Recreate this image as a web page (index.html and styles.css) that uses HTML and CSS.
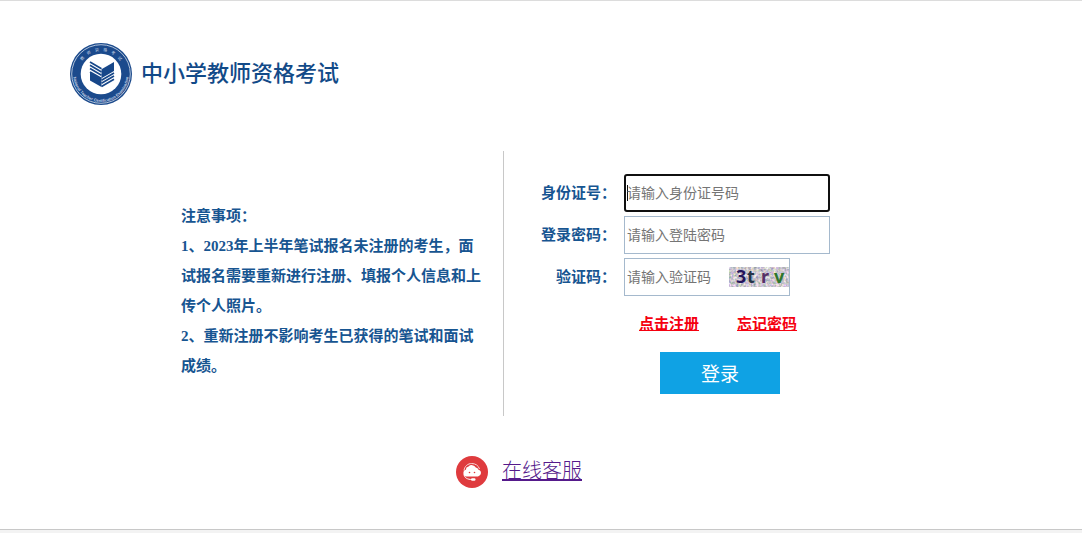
FILE: index.html
```html
<!DOCTYPE html>
<html lang="zh-CN">
<head>
<meta charset="utf-8">
<meta name="viewport" content="width=device-width, initial-scale=1">
<title>中小学教师资格考试</title>
<link rel="stylesheet" href="styles.css">
</head>
<body>
<div class="page">
  <header class="brand">
    <svg class="brand-logo" viewBox="0 0 62 62" aria-hidden="true">
      <defs>
        <path id="arc-top" d="M8 31a23 23 0 0 1 46 0"/>
        <path id="arc-bottom" d="M3.900 25A27.800 27.800 0 1 0 58.100 25"/>
      </defs>
      <circle cx="31" cy="31" r="31" fill="#1b4a8c"/>
      <circle cx="31" cy="31" r="29.300" fill="none" stroke="#d5dfec" stroke-width=".8"/>
      <circle cx="31" cy="31" r="20.300" fill="#fff"/>
      <text class="seal-cn" text-anchor="middle"><textPath href="#arc-top" startOffset="50%">教　师　资　格　考　试</textPath></text>
      <text class="seal-en" text-anchor="middle"><textPath href="#arc-bottom" startOffset="50%">National Teacher Certification Examination</textPath></text>
      <g fill="#174789">
        <path d="M20 29.300 31.500 35.800v8.200L20 37.500z"/>
        <path d="M31.500 26.200 44 19v9L31.500 35.200z"/>
      </g>
      <g fill="none" stroke="#174789" stroke-width="1.700">
        <path d="M20 19 31.500 25.700M20 22.300 31.500 29M20 25.600 31.500 32.300M20 28.900 31.500 35.600"/>
        <path d="M31.500 37.200 44 30M31.500 40.300 44 33.100M31.500 43.400 44 36.200"/>
      </g>
    </svg>
    <h1 class="brand-name">中小学教师资格考试</h1>
  </header>

  <main class="content">
    <section class="notice">
      <div class="notice-text">
        <p>注意事项：</p>
        <p>1、2023年上半年笔试报名未注册的考生，面试报名需要重新进行注册、填报个人信息和上传个人照片。</p>
        <p>2、重新注册不影响考生已获得的笔试和面试成绩。</p>
      </div>
    </section>
    <form class="login">
      <div class="row">
        <label class="label" for="idno">身份证号：</label>
        <input class="field field-active" id="idno" type="text" placeholder="请输入身份证号码">
      </div>
      <div class="row">
        <label class="label" for="pwd">登录密码：</label>
        <input class="field" id="pwd" type="password" placeholder="请输入登陆密码">
      </div>
      <div class="row">
        <label class="label" for="code">验证码：</label>
        <div class="field captcha-box">
          <input class="captcha-input" id="code" type="text" placeholder="请输入验证码">
          <svg class="captcha" viewBox="0 0 60 20" role="img" aria-label="3trv">
            <defs>
              <filter id="grain" x="0" y="0" width="100%" height="100%" color-interpolation-filters="sRGB">
                <feTurbulence type="fractalNoise" baseFrequency=".4" numOctaves="2" seed="4"/>
                <feColorMatrix values=".7 0 0 0 .45  .5 .3 0 0 .38  .3 0 .4 0 .46  0 0 0 0 1"/>
              </filter>
            </defs>
            <rect width="60" height="20" filter="url(#grain)"/>
            <text class="captcha-char" x="7" y="16" fill="#24145c">3</text>
            <text class="captcha-char" x="18" y="16" fill="#263448">t</text>
            <text class="captcha-char" x="32" y="16" fill="#573067">r</text>
            <text class="captcha-char" x="45" y="16" fill="#2e762c">v</text>
          </svg>
        </div>
      </div>
      <div class="links">
        <a class="link" href="#register">点击注册</a>
        <a class="link" href="#forgot">忘记密码</a>
      </div>
      <button class="submit" type="submit">登录</button>
    </form>
  </main>

  <div class="service">
    <svg class="service-icon" viewBox="0 0 32 32" aria-hidden="true">
      <circle cx="16" cy="16" r="16" fill="#df3b3e"/>
      <path d="M8 14.500C8.500 10 12 7.500 15.700 7.500S22.500 9.500 23.500 13" fill="none" stroke="#f8d5d5" stroke-width="1"/>
      <path d="M10.500 20.500a3.500 3.500 0 0 1-.7-6.800 3.300 3.300 0 0 1 2.700-3.200 4.600 4.600 0 0 1 7.300.9 3.300 3.300 0 0 1 2.700 2.300 3.500 3.500 0 0 1-.5 6.800z" fill="#fff"/>
      <path d="M8 18.500c.5 3.500 3.500 5 8 5" fill="none" stroke="#fff" stroke-width="1"/>
      <rect x="15" y="22.300" width="4.500" height="2.400" rx="1.200" fill="#fff"/>
      <circle cx="13.500" cy="16.500" r=".8" fill="#df3b3e"/>
      <circle cx="18.500" cy="16.500" r=".8" fill="#df3b3e"/>
    </svg>
    <a class="service-link" href="#service">在线客服</a>
  </div>
</div>
</body>
</html>
```
FILE: styles.css
```css
* { box-sizing: border-box; }

body {
  margin: 0;
  background: #f3f3f3;
  color: #175591;
  font-family: "Liberation Serif", "Noto Sans CJK SC", sans-serif;
  font-size: 15px;
}

.page {
  border-top: 1px solid #dcdcdc;
  border-bottom: 1px solid #c8c8c8;
  background: #fff;
  padding-bottom: 41px;
}

.brand {
  display: flex;
  align-items: center;
  gap: 9px;
  padding: 42px 70px 0;
}

.brand-logo { width: 62px; height: 62px; }

.brand-name {
  margin: 0;
  padding-bottom: 6px;
  color: #124a88;
  font-family: "Noto Sans CJK SC", sans-serif;
  font-size: 22px;
  font-weight: 500;
  line-height: 32px;
}

.seal-cn {
  fill: #c8d5e7;
  font: 4px "Noto Sans CJK SC", sans-serif;
}

.seal-en {
  fill: #c8d5e7;
  font: bold 4px "Liberation Sans", sans-serif;
}

.content {
  display: grid;
  grid-template-columns: 503fr 579fr;
  margin-top: 46px;
}

.notice {
  display: flex;
  justify-content: flex-end;
  align-items: center;
  padding: 50px 22px 35px 16px;
}

.notice-text {
  width: 300px;
  font-weight: 700;
  line-height: 30px;
}

.notice-text p { margin: 0; }

.login {
  display: flex;
  flex-direction: column;
  align-items: flex-start;
  gap: 4px;
  padding: 23px 16px 22px 37px;
  border-left: 1px solid #c8c8c8;
}

.row {
  display: flex;
  align-items: center;
  gap: 8px;
}

.label {
  width: 75px;
  padding-bottom: 3px;
  font-weight: 700;
  text-align: right;
}

.field {
  width: 206px;
  height: 38px;
  padding: 0 2px 2px;
  border: 1px solid #a5b9cd;
  background: #fff;
  font: 14px "Noto Sans CJK SC", sans-serif;
}

.field::placeholder,
.captcha-input::placeholder { color: #757575; }

.field-active {
  padding: 0 1px 2px;
  border: 2px solid #101010;
  border-radius: 3px;
  background: linear-gradient(#101010, #101010) 1px center / 1px 16px no-repeat #fff;
}

.captcha-box {
  display: flex;
  align-items: center;
  width: 166px;
  padding: 0 0 0 2px;
}

.captcha-input {
  flex: 1;
  min-width: 0;
  padding: 0 0 2px;
  border: 0;
  outline: 0;
  background: transparent;
  font: inherit;
}

.captcha { width: 60px; height: 20px; overflow: visible; }

.captcha-char { font: bold 18px "Noto Sans", sans-serif; }

.links {
  display: flex;
  gap: 38px;
  margin: 13px 0 12px 98px;
  line-height: 23px;
}

.link { color: #f5000f; font-weight: 700; }

.submit {
  width: 120px;
  height: 42px;
  margin-left: 119px;
  padding: 0 0 2px;
  border: 0;
  background: #0fa2e4;
  color: #fff;
  font: 19px "Noto Sans CJK SC", sans-serif;
}

.service {
  display: flex;
  justify-content: center;
  align-items: center;
  gap: 14px;
  margin-top: 40px;
  padding-right: 44px;
}

.service-icon { width: 32px; height: 32px; }

.service-link {
  padding-bottom: 3px;
  color: #551a8b;
  font-size: 20px;
  font-weight: 300;
  line-height: 24px;
}
```
